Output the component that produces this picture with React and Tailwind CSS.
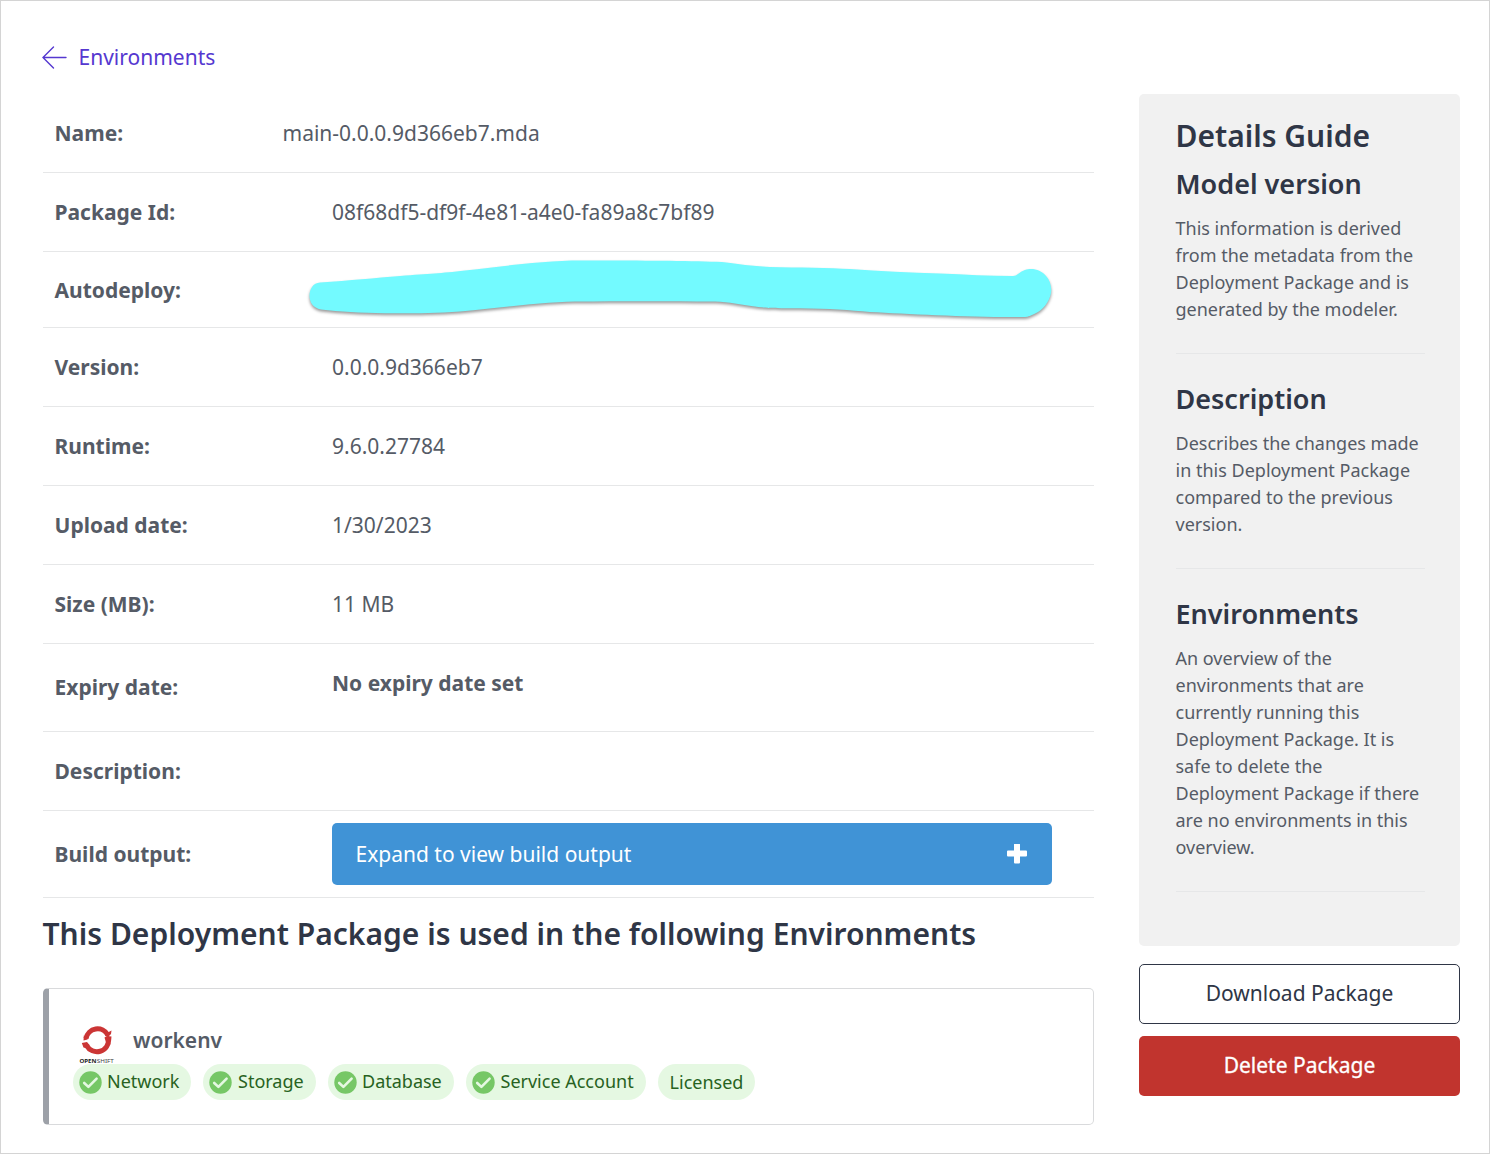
const rows = [
  { label: "Name:", value: "main-0.0.0.9d366eb7.mda", h: "h-[79px]", wide: true },
  { label: "Package Id:", value: "08f68df5-df9f-4e81-a4e0-fa89a8c7bf89", h: "h-[79px]" },
  { label: "Autodeploy:", redacted: true, h: "h-[76px]" },
  { label: "Version:", value: "0.0.0.9d366eb7", h: "h-[79px]" },
  { label: "Runtime:", value: "9.6.0.27784", h: "h-[79px]" },
  { label: "Upload date:", value: "1/30/2023", h: "h-[79px]" },
  { label: "Size (MB):", value: "11 MB", h: "h-[79px]" },
  { label: "Expiry date:", value: "No expiry date set", bold: true, h: "h-[88px] pb-px" },
  { label: "Description:", h: "h-[79px]" },
  { label: "Build output:", build: true, h: "h-[87px]" },
];

const guide = [
  {
    title: "Model version",
    lines: ["This information is derived", "from the metadata from the", "Deployment Package and is", "generated by the modeler."],
  },
  {
    title: "Description",
    lines: ["Describes the changes made", "in this Deployment Package", "compared to the previous", "version."],
  },
  {
    title: "Environments",
    lines: [
      "An overview of the",
      "environments that are",
      "currently running this",
      "Deployment Package. It is",
      "safe to delete the",
      "Deployment Package if there",
      "are no environments in this",
      "overview.",
    ],
  },
];

function Redaction() {
  return (
    <svg
      className="absolute left-[257px] top-0 overflow-visible drop-shadow-[0_2px_1.5px_rgba(0,0,0,0.4)]"
      width="760"
      height="75"
      viewBox="300 252 760 75"
    >
      <path
        fill="#73faff"
        d="M320 282.5 C350 280.5 375 278 400 276 C430 273.500 440 273.500 465 270.500 C500 266.500 545 260.500 580 260.500 C630 260.300 690 260.700 722 262 C740 264 750 266 770 267 C800 267.500 830 268 850 269 C880 271.500 910 272.500 940 273.500 C965 274.500 990 276 1013 276 Q1016 276 1018 274 C1023 270 1027 269 1031 269 C1043 269 1051.300 279 1051.300 290 C1051.300 298 1045 308 1038 312 Q1029 317 1025 317 C970 317.500 910 314 870 312 C850 310 830 308.500 800 308.200 C775 308 765 308 755 306.500 C740 304.500 730 302 715 301.500 C670 301 620 301 575 301.500 C540 302.500 495 308 460 311.500 C430 313.500 400 313.500 385 313.200 C360 313 340 311.500 321 309.500 C313 308 309.500 302 309.500 295.500 C309.700 289 313 283 320 282.500 Z"
      />
    </svg>
  );
}

function BuildOutput() {
  return (
    <button className="flex h-[62px] w-[720px] items-center justify-between rounded-[5px] bg-[#4093d6] pl-[23.5px] pr-[25px] text-white">
      <span>Expand to view build output</span>
      <svg width="20" height="20" viewBox="0 0 20 20" className="-mt-px">
        <path fill="currentColor" transform="translate(0 -0.4)" d="M8 0h4q1 0 1 1v6h6q1 0 1 1v4q0 1-1 1h-6v6q0 1-1 1H8q-1 0-1-1v-6H1q-1 0-1-1V8q0-1 1-1h6V1q0-1 1-1Z" />
      </svg>
    </button>
  );
}

function Row({ label, value, h, wide, bold, redacted, build }) {
  return (
    <div className={`relative flex items-center border-b border-[#e6e7e8] pl-[11.5px] ${h}`}>
      <div className={`shrink-0 font-bold ${wide ? "w-[228px]" : "w-[277.5px]"}`}>{label}</div>
      {value && <div className={bold ? "-mt-2 font-bold" : ""}>{value}</div>}
      {redacted && <Redaction />}
      {build && <BuildOutput />}
    </div>
  );
}

function OpenShiftLogo() {
  return (
    <svg width="36" height="40" viewBox="0 0 36 40" className="mt-0.5 block">
      <g fill="none" stroke="#cb3535" strokeWidth="5">
        <path d="M7 13.500A11.700 11.700 0 0 1 28.800 10" />
        <path d="M29.600 14A11.700 11.700 0 0 1 7.600 20.500" />
      </g>
      <path fill="#cb3535" d="M27 8.500 32.500 5.500 32 9 29.500 11.500 26.500 11Z M4.800 10.500 9 12 8.500 14.500 4.500 15.500Z M25.500 12.500 28 11 32.500 11.500 32 16.500 27 17.500Z M2.800 18 8 17 10.500 20 8 23.500 4.500 22.500Z" />
      <text x="0.500" y="38" fontSize="5.600" fontWeight="700" fill="#222" fontFamily="Noto Sans, sans-serif" textLength="17" lengthAdjust="spacingAndGlyphs">OPEN</text>
      <text x="17.800" y="38" fontSize="5.600" fill="#444" fontFamily="Noto Sans, sans-serif" textLength="17" lengthAdjust="spacingAndGlyphs">SHIFT</text>
    </svg>
  );
}

function Badge({ text, width, gap = "gap-[6px]" }) {
  return (
    <span className={`flex h-9 items-center rounded-full bg-[#e5f8e2] pl-[5.5px] ${gap} ${width}`}>
      <svg width="23" height="23" viewBox="0 0 23 23" className="shrink-0">
        <circle cx="11.500" cy="11.500" r="11.200" fill="#76c766" />
        <path d="m5.200 12 4.200 3.900 8.200-8.300" fill="none" stroke="#e5f8e2" strokeWidth="2.600" strokeLinecap="round" strokeLinejoin="round" />
      </svg>
      <span className="-mt-px">{text}</span>
    </span>
  );
}

export default function App() {
  return (
    <div className="flex h-[1154px] w-[1490px] flex-col border border-[#d4d4d4] bg-white font-['Noto_Sans',sans-serif] text-[21px] leading-[30px] whitespace-nowrap text-[#555b66]">
      <a className="ml-[41px] mt-[41px] flex h-[30px] items-center gap-[11.5px] text-[#5538d0]">
        <svg width="25" height="24" viewBox="0 0 25 24" fill="none" stroke="currentColor" strokeWidth="1.400" strokeLinecap="round" className="mt-px">
          <path d="M24 11.500H1M11.500 1 1 11.500 11.500 22" />
        </svg>
        <span>Environments</span>
      </a>
      <div className="ml-[42px] mt-[22px] flex gap-[45px]">
        <main className="w-[1051px]">
          {rows.map((r) => (
            <Row key={r.label} {...r} />
          ))}
          <h2 className="-ml-[0.5px] mt-4 text-[30px] font-semibold leading-10 tracking-[0.02px] text-[#2f3646]">
            This Deployment Package is used in the following Environments
          </h2>
          <section className="mt-[34px] h-[137px] rounded-[5px] border border-l-[6px] border-[#d9dadc] border-l-[#9da1a8] pl-6 pt-[35px]">
            <div className="flex h-10 items-center pl-[6px]">
              <OpenShiftLogo />
              <span className="-mt-[9px] ml-[18px] font-semibold">workenv</span>
            </div>
            <div className="flex gap-3 text-[18px] leading-[27px] text-[#276221]">
              <Badge text="Network" width="w-[118px]" gap="gap-[5.5px]" />
              <Badge text="Storage" width="w-[113px]" gap="gap-[6.5px]" />
              <Badge text="Database" width="w-[126px]" gap="gap-[5.5px]" />
              <Badge text="Service Account" width="w-[180px]" />
              <span className="flex h-9 w-[97px] items-center justify-center rounded-full bg-[#e5f8e2]">Licensed</span>
            </div>
          </section>
        </main>
        <aside className="w-[321px]">
          <div className="h-[852px] rounded-[5px] bg-[#f1f1f1] pl-[36.5px] pr-9 pt-[22px]">
            <h2 className="text-[30px] font-semibold leading-10 text-[#2f3646]">Details Guide</h2>
            {guide.map((g) => (
              <div key={g.title} className="mb-[17px] w-[249px] border-b border-[#e6e7e8] pb-[30px]">
                <h3 className="mb-3 pt-[9px] text-[27px] font-semibold leading-[38px] text-[#2f3646]">{g.title}</h3>
                <p className="text-[18px] leading-[27px]">
                  {g.lines.map((l) => (
                    <span key={l} className="block">{l}</span>
                  ))}
                </p>
              </div>
            ))}
          </div>
          <button className="mt-[18px] flex h-[60px] w-full items-center justify-center rounded-[5px] border border-[#2f3646] pb-0.5 text-[#2f3646]">
            Download Package
          </button>
          <button className="mt-3 flex h-[60px] w-full items-center justify-center rounded-[5px] bg-[#c1342e] pb-0.5 text-white [-webkit-text-stroke:0.3px_white]">
            Delete Package
          </button>
        </aside>
      </div>
    </div>
  );
}
